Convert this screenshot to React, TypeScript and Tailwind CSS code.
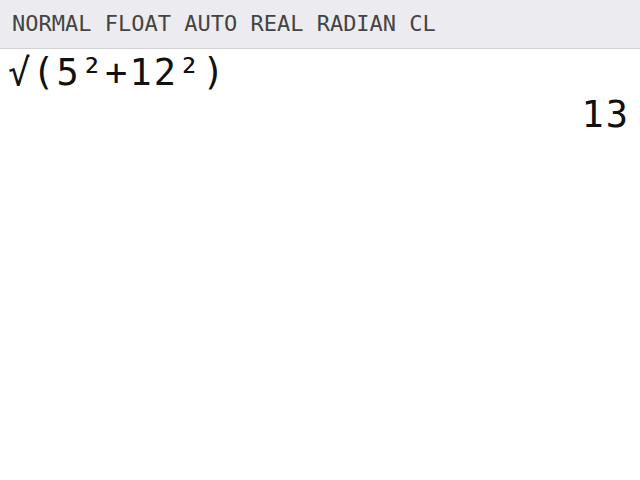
import React from "react";

const mono = { fontFamily: '"DejaVu Sans Mono", "Liberation Mono", monospace' };

export default function App() {
  return (
    <div className="w-[640px] h-[480px] bg-white text-[#111]" style={mono}>
      <div className="h-[49px] bg-[#ececf0] border-b border-[#d2d2d6] flex items-center px-3">
        <span className="text-[22px] leading-none text-[#444]">NORMAL FLOAT AUTO REAL RADIAN CL</span>
      </div>
      <div className="pl-[8px] pr-[10px] pt-[4px]">
        <div className="text-[37px] leading-[40px] tracking-[2px]">√(5²+12²)</div>
        <div className="text-[37px] leading-[40px] tracking-[2px] text-right mt-[2px]">13</div>
      </div>
    </div>
  );
}
